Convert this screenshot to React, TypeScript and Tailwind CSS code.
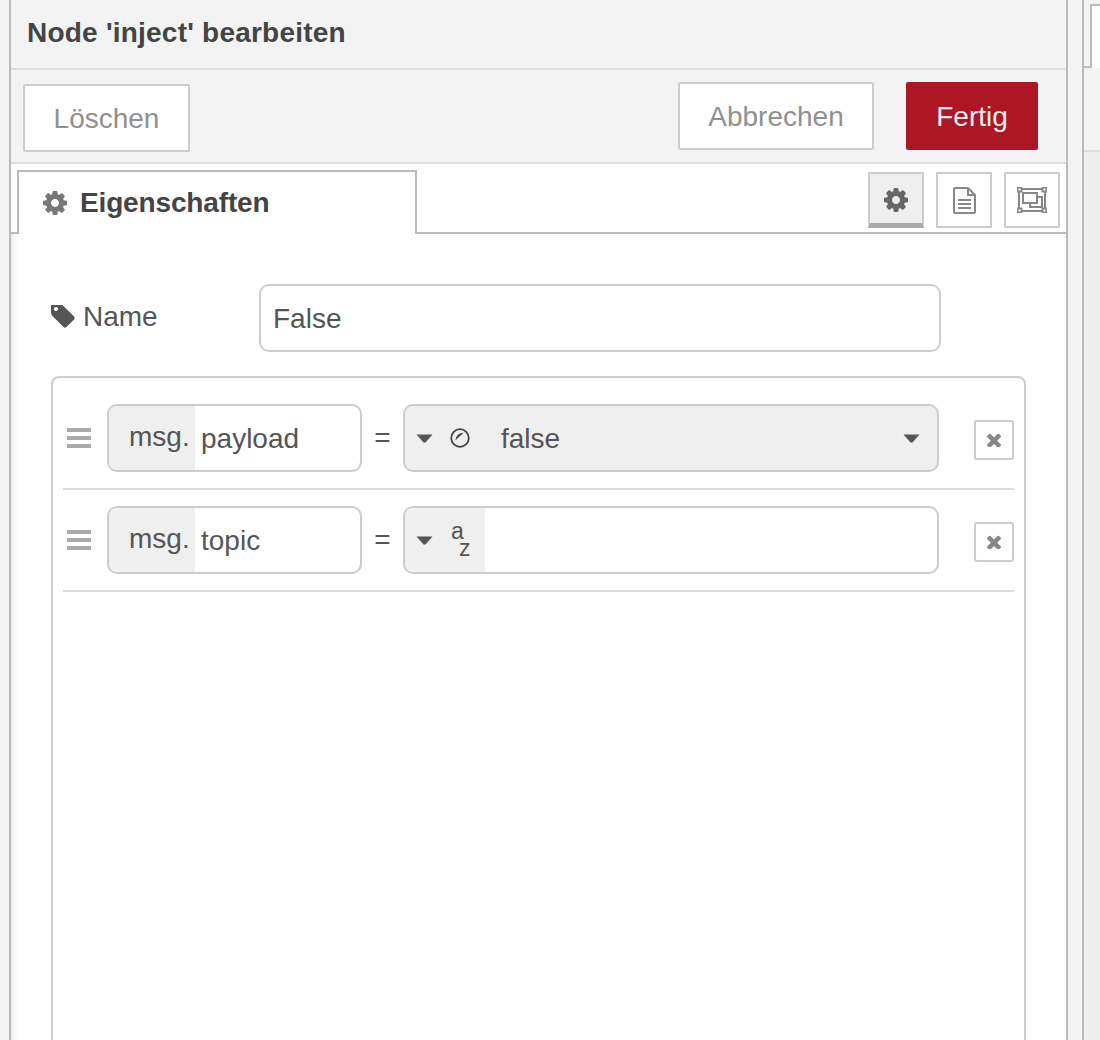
const font = "font-['Liberation_Sans',Arial,sans-serif]"

function CogIcon({ className }: { className?: string }) {
  return (
    <svg viewBox="0 0 1792 1792" className={className} fill="currentColor">
      <path d="M1152 896q0-106-75-181t-181-75-181 75-75 181 75 181 181 75 181-75 75-181zm512-109v222q0 12-8 23t-20 13l-185 28q-19 54-39 91 35 50 107 138 10 12 10 25t-9 23q-27 37-99 108t-94 71q-12 0-26-9l-138-108q-44 23-91 38-16 136-29 186-7 28-36 28h-222q-14 0-24.5-8.5t-11.5-21.5l-28-184q-49-16-90-37l-141 107q-10 9-25 9-14 0-25-11-126-114-165-168-7-10-7-23 0-12 8-23 15-21 51-66.5t54-70.5q-27-50-41-99l-183-27q-13-2-21-12.5t-8-23.5v-222q0-12 8-23t19-13l186-28q14-46 39-92-40-57-107-138-10-12-10-24 0-10 9-23 26-36 98.5-107.5t94.5-71.5q13 0 26 10l138 107q44-23 91-38 16-136 29-186 7-28 36-28h222q14 0 24.5 8.5t11.5 21.5l28 184q49 16 90 37l142-107q9-9 24-9 13 0 25 10 129 119 165 170 7 8 7 22 0 12-8 23-15 21-51 66.5t-54 70.5q26 50 41 98l183 28q13 2 21 12.5t8 23.5z" />
    </svg>
  )
}

function TagIcon({ className }: { className?: string }) {
  return (
    <svg viewBox="128 192 1536 1536" className={className} fill="currentColor">
      <path d="M576 448q0-53-37.5-90.5t-90.5-37.5-90.5 37.5-37.5 90.5 37.5 90.5 90.5 37.5 90.5-37.5 37.5-90.5zm1067 576q0 53-37 90l-491 492q-39 37-91 37-53 0-90-37l-715-716q-38-37-64.5-101t-26.5-117v-416q0-52 38-90t90-38h416q53 0 117 26.5t102 64.5l715 714q37 39 37 91z" />
    </svg>
  )
}

function TimesIcon() {
  return (
    <svg viewBox="300 300 1190 1190" className="w-[14px] h-[14px] text-[#888]" fill="currentColor">
      <path d="M1490 1322q0 40-28 68l-136 136q-28 28-68 28t-68-28l-294-294-294 294q-28 28-68 28t-68-28l-136-136q-28-28-28-68t28-68l294-294-294-294q-28-28-28-68t28-68l136-136q28-28 68-28t68 28l294 294 294-294q28-28 68-28t68 28l136 136q28 28 28 68t-28 68l-294 294 294 294q28 28 28 68z" />
    </svg>
  )
}

function Caret() {
  return (
    <svg viewBox="0 0 17 9" className="w-[17px] h-[9px] text-[#555]" fill="currentColor">
      <path d="M0.5 0.5h16l-7 8h-2z" />
    </svg>
  )
}

function BoolIcon() {
  return (
    <svg viewBox="0 0 20 20" className="w-5 h-5 text-[#444]" fill="none">
      <circle cx="10" cy="10" r="8.8" stroke="currentColor" strokeWidth="1.8" />
      <path d="M5.2 12.5L13.6 4.8Q6.5 4.8 5.2 12.5z" fill="currentColor" />
    </svg>
  )
}

function FileIcon() {
  return (
    <svg viewBox="0 0 23 27" className="w-[23px] h-[27px] text-[#888]" fill="none" stroke="currentColor" strokeWidth="2">
      <path d="M2 1h13l7 7v17a1 1 0 0 1-1 1H2a1 1 0 0 1-1-1V2a1 1 0 0 1 1-1z" />
      <path d="M15 1v7h7" />
      <path d="M5 13h13M5 17h13M5 21h13" />
    </svg>
  )
}

function AppearanceIcon() {
  return (
    <svg viewBox="0 0 30 26" className="w-[30px] h-[26px] text-[#888]" fill="none" stroke="currentColor" strokeWidth="2">
      <path d="M3 2h24M3 24h24M2 3v20M28 3v20" />
      <rect x="0.5" y="0.5" width="4" height="4" fill="#fff" />
      <rect x="25.5" y="0.5" width="4" height="4" fill="#fff" />
      <rect x="0.5" y="21.5" width="4" height="4" fill="#fff" />
      <rect x="25.5" y="21.5" width="4" height="4" fill="#fff" />
      <path d="M6 6h14v10H6z" />
      <path d="M20 10h5v10H13v-4" />
    </svg>
  )
}

function ToolButton({ active, children }: { active?: boolean; children: React.ReactNode }) {
  return (
    <div
      className={`w-[56px] h-[56px] flex items-center justify-center border-2 border-[#ccc] ${
        active ? "bg-[#efefef] border-b-[5px] border-b-[#aaa] pt-[3px]" : "bg-white"
      }`}
    >
      {children}
    </div>
  )
}

function Button({ label, className }: { label: string; className?: string }) {
  return (
    <div className={`h-[68px] flex items-center justify-center pt-[2px] bg-white border-2 border-[#ccc] rounded-[2px] text-[#909090] ${className}`}>
      {label}
    </div>
  )
}

function PropertyRow({ field, children }: { field: string; children: React.ReactNode }) {
  return (
    <div className="h-[102px] pt-4 flex items-start border-b-2 border-[#ddd]">
      {/* drag handle */}
      <div className="w-[24px] ml-1 mt-6 flex flex-col gap-1">
        <div className="h-1 bg-[#aaa]" />
        <div className="h-1 bg-[#aaa]" />
        <div className="h-1 bg-[#aaa]" />
      </div>
      <div className="ml-4 w-[255px] h-[68px] flex border-2 border-[#ccc] rounded-[10px] overflow-hidden">
        <div className="w-[86px] shrink-0 bg-[#efefef] pl-5 pt-[15px] leading-[32px] text-[#555]">msg.</div>
        <div className="pl-[6px] pt-[17px] leading-[32px] text-[#555]">{field}</div>
      </div>
      <div className="w-[41px] h-[68px] flex items-center justify-center text-[#555]">=</div>
      {children}
      <div className="ml-[35px] mt-4 w-10 h-10 flex items-center justify-center border-2 border-[#ccc] rounded-[3px] bg-white">
        <TimesIcon />
      </div>
    </div>
  )
}

export default function App() {
  return (
    <div className={`${font} w-[1100px] h-[1040px] overflow-hidden flex bg-[#f3f3f3] text-[28px] text-[#555]`}>
      <div className="w-[9px] shrink-0" />

      {/* Edit tray */}
      <div className="w-[1059px] shrink-0 flex flex-col border-x-2 border-[#bbb] bg-white">
        <div className="h-[70px] shrink-0 bg-[#f3f3f3] border-b-2 border-[#ddd] pl-4 flex items-center pb-[2px] font-bold text-[#444] tracking-[0.22px]">
          Node 'inject' bearbeiten
        </div>

        <div className="h-[94px] shrink-0 bg-[#f3f3f3] border-b-2 border-[#ddd] pl-3 pr-7 pt-3 flex">
          <Button label="Löschen" className="w-[167px] mt-[2px]" />
          <Button label="Abbrechen" className="ml-auto w-[196px]" />
          <div className="ml-8 w-[132px] h-[68px] flex items-center justify-center pt-[2px] bg-[#ad1625] rounded-[2px] text-[#eee]">
            Fertig
          </div>
        </div>

        {/* Tabs */}
        <div className="h-[70px] shrink-0 flex border-b-2 border-[#bbb] pl-[6px] pr-[6px]">
          <div className="mt-[6px] w-[400px] h-[64px] border-x-2 border-t-2 border-[#bbb] bg-white flex items-center pl-[22px] -mb-[2px] font-bold text-[#444] tracking-[-0.15px]">
            <CogIcon className="w-[28px] h-[28px] text-[#777]" />
            <span className="ml-[11px]">Eigenschaften</span>
          </div>
          <div className="ml-auto mt-2 flex gap-3">
            <ToolButton active>
              <CogIcon className="w-[28px] h-[28px] text-[#666]" />
            </ToolButton>
            <ToolButton>
              <FileIcon />
            </ToolButton>
            <ToolButton>
              <AppearanceIcon />
            </ToolButton>
          </div>
        </div>

        {/* Form */}
        <div className="flex-1 min-h-0 pl-10 pt-[50px] shadow-[inset_8px_0_8px_-8px_rgba(0,0,0,0.15)]">
          <div className="flex items-start h-[68px]">
            <div className="w-[208px] flex items-center pt-3">
              <TagIcon className="w-6 h-6 text-[#555]" />
              <span className="ml-2">Name</span>
            </div>
            <div className="w-[682px] h-[68px] flex items-center pl-3 pt-[2px] border-2 border-[#ccc] rounded-[10px] bg-white">
              False
            </div>
          </div>

          <div className="mt-6 w-[975px] h-[800px] border-2 border-[#ccc] rounded-[8px] px-[10px] pt-[10px]">
            <PropertyRow field="payload">
              <div className="w-[536px] h-[68px] flex items-center border-2 border-[#ccc] rounded-[10px] bg-[#efefef]">
                <div className="ml-[11px]">
                  <Caret />
                </div>
                <div className="ml-[17px]">
                  <BoolIcon />
                </div>
                <span className="ml-[31px] pt-[2px]">false</span>
                <div className="ml-auto mr-[17px]">
                  <Caret />
                </div>
              </div>
            </PropertyRow>
            <PropertyRow field="topic">
              <div className="w-[536px] h-[68px] flex border-2 border-[#ccc] rounded-[10px] overflow-hidden bg-white">
                <div className="w-[80px] bg-[#efefef] flex items-center">
                  <div className="ml-[11px]">
                    <Caret />
                  </div>
                  <div className="ml-[18px] flex flex-col text-[23px] leading-[17px] text-[#555]">
                    <span>a</span>
                    <span className="ml-2">z</span>
                  </div>
                </div>
              </div>
            </PropertyRow>
          </div>
        </div>
      </div>

      <div className="w-[14px] shrink-0" />

      {/* Edge of the tray underneath */}
      <div className="flex-1 border-l-2 border-[#bbb] bg-[#eee] flex flex-col">
        <div className="h-[68px] shrink-0 bg-[#f3f3f3] flex">
          <div className="w-[6px] self-end h-[2px] bg-[#bbb]" />
          <div className="flex-1 mt-1 bg-white border-l-2 border-t-2 border-[#bbb]" />
        </div>
        <div className="h-[84px] shrink-0 bg-[#f3f3f3] border-b-2 border-[#ddd]" />
      </div>
    </div>
  )
}
